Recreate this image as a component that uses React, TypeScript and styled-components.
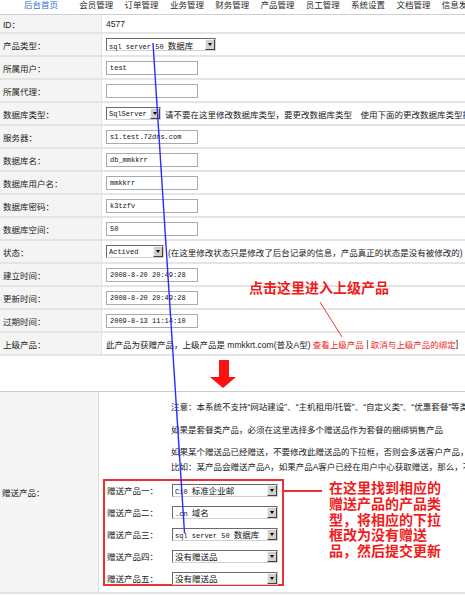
import React from "react";
import styled, { createGlobalStyle } from "styled-components";

const GlobalStyle = createGlobalStyle`
  html, body { margin: 0; padding: 0; background: #fff; }
  body {
    font-family: "Liberation Sans", "Noto Sans CJK SC", sans-serif;
    color: #222;
  }
`;

const RED = "#f01c1c";

const navItems = [
  "后台首页",
  "会员管理",
  "订单管理",
  "业务管理",
  "财务管理",
  "产品管理",
  "员工管理",
  "系统设置",
  "文档管理",
  "信息发布",
];

type Field =
  | { label: string; kind: "text"; value: string }
  | { label: string; kind: "input"; value: string }
  | { label: string; kind: "select"; value: React.ReactNode; width: number; note?: string };

const fields: Field[] = [
  { label: "ID：", kind: "text", value: "4577" },
  {
    label: "产品类型：",
    kind: "select",
    width: 110,
    value: (
      <>
        sql server 50 <Han>数据库</Han>
      </>
    ),
  },
  { label: "所属用户：", kind: "input", value: "test" },
  { label: "所属代理：", kind: "input", value: "" },
  {
    label: "数据库类型：",
    kind: "select",
    width: 55,
    value: "SqlServer",
    note: "请不要在这里修改数据库类型，要更改数据库类型　使用下面的更改数据库类型操作",
  },
  { label: "服务器：", kind: "input", value: "s1.test.72dns.com" },
  { label: "数据库名：", kind: "input", value: "db_mmkkrr" },
  { label: "数据库用户名：", kind: "input", value: "mmkkrr" },
  { label: "数据库密码：", kind: "input", value: "k3tzfv" },
  { label: "数据库空间：", kind: "input", value: "50" },
  {
    label: "状态：",
    kind: "select",
    width: 58,
    value: "Actived",
    note: "(在这里修改状态只是修改了后台记录的信息，产品真正的状态是没有被修改的)",
  },
  { label: "建立时间：", kind: "input", value: "2008-8-20 20:49:28" },
  { label: "更新时间：", kind: "input", value: "2008-8-20 20:49:28" },
  { label: "过期时间：", kind: "input", value: "2009-8-13 11:14:10" },
];

const gifts: { label: string; value: React.ReactNode }[] = [
  { label: "赠送产品一：", value: <>C10 <Han>标准企业邮</Han></> },
  { label: "赠送产品二：", value: <>.cn <Han>域名</Han></> },
  { label: "赠送产品三：", value: <>sql server 50 <Han>数据库</Han></> },
  { label: "赠送产品四：", value: <Han>没有赠送品</Han> },
  { label: "赠送产品五：", value: <Han>没有赠送品</Han> },
];

function Select({ width, children }: { width: number; children: React.ReactNode }) {
  return (
    <SelectBox style={{ width }}>
      <SelectText>{children}</SelectText>
      <SelectButton />
    </SelectBox>
  );
}

function Han({ children }: { children: React.ReactNode }) {
  return <HanText>{children}</HanText>;
}

export default function App() {
  return (
    <Page>
      <GlobalStyle />
      <Nav>
        {navItems.map((item, i) => (
          <NavItem key={item} $active={i === 0}>
            {item}
          </NavItem>
        ))}
      </Nav>

      <FormTable>
        {fields.map((f) => (
          <React.Fragment key={f.label}>
            <LabelCell>{f.label}</LabelCell>
            <ValueCell>
              {f.kind === "text" && f.value}
              {f.kind === "input" && <TextInput readOnly value={f.value} />}
              {f.kind === "select" && (
                <>
                  <Select width={f.width}>{f.value}</Select>
                  {f.note && <Note>{f.note}</Note>}
                </>
              )}
            </ValueCell>
          </React.Fragment>
        ))}
        <LabelCell>上级产品：</LabelCell>
        <ValueCell>
          此产品为获赠产品，上级产品是 mmkkrt.com(普及A型)&nbsp;
          <RedLink>查看上级产品</RedLink>&nbsp;|&nbsp;
          <RedLink>取消与上级产品的绑定</RedLink>]
        </ValueCell>
      </FormTable>

      <ArrowGap>
        <svg width="27" height="28" viewBox="0 0 27 28">
          <rect x="10" y="0" width="10" height="17" fill="#ff1010" />
          <polygon points="1,17 27,17 14,28" fill="#ff1010" />
        </svg>
      </ArrowGap>

      <GiftTable>
        <GiftLabel>赠送产品：</GiftLabel>
        <GiftValue>
          <Notes>
            <p>注意：本系统不支持“网站建设”、“主机租用/托管”、“自定义类”、“优惠套餐”等类型产品</p>
            <p>如果是套餐类产品，必须在这里选择多个赠送品作为套餐的捆绑销售产品</p>
            <p>
              如果某个赠送品已经赠送，不要修改此赠送品的下拉框，否则会多送客户产品，请注意
              <br />
              比如：某产品会赠送产品A，如果产品A客户已经在用户中心获取赠送，那么，不要修改
            </p>
          </Notes>
          <GiftArea>
            <RedBox>
              <GiftList>
                {gifts.map((g) => (
                  <GiftLine key={g.label}>
                    <GiftName>{g.label}</GiftName>
                    <Select width={106}>{g.value}</Select>
                  </GiftLine>
                ))}
              </GiftList>
            </RedBox>
            <Connector />
            <Callout>
              在这里找到相应的
              <br />
              赠送产品的产品类
              <br />
              型，将相应的下拉
              <br />
              框改为没有赠送
              <br />
              品，然后提交更新
            </Callout>
          </GiftArea>
        </GiftValue>
      </GiftTable>

      <Marks width="465" height="596" viewBox="0 0 465 596">
        <line x1="153" y1="43" x2="184.5" y2="533" stroke="#2b2bff" strokeWidth="1.4" />
        <line x1="320" y1="302" x2="342" y2="337" stroke={RED} strokeWidth="0.9" />
      </Marks>
      <ClickHint>点击这里进入上级产品</ClickHint>
    </Page>
  );
}

const Page = styled.div`
  position: relative;
  width: 465px;
  height: 596px;
  overflow: hidden;
  font-size: 8.5px;
`;

const Nav = styled.div`
  display: flex;
  gap: 11.3px;
  height: 14px;
  padding-left: 24px;
  border-bottom: 1px solid #cfcfcf;
  line-height: 10px;
  white-space: nowrap;
  overflow: hidden;
`;

const NavItem = styled.span<{ $active: boolean }>`
  flex: none;
  width: 34px;
  margin-right: ${(p) => (p.$active ? "10px" : "0")};
  color: ${(p) => (p.$active ? "#2f6fd0" : "#2a2a2a")};
`;

const FormTable = styled.div`
  display: grid;
  grid-template-columns: 101px 1fr;
  grid-template-rows: 17px repeat(14, 21px);
  row-gap: 2px;
  column-gap: 1px;
  padding-bottom: 2px;
  background: #e4e4e4;
`;

const LabelCell = styled.div`
  display: flex;
  align-items: center;
  padding-left: 3px;
  background: #f4f4f4;
  white-space: nowrap;
`;

const ValueCell = styled.div`
  display: flex;
  align-items: center;
  padding-left: 4px;
  background: #fff;
  white-space: nowrap;
  overflow: hidden;
`;

const TextInput = styled.input`
  box-sizing: border-box;
  width: 92px;
  height: 14px;
  margin: 0;
  padding: 0 3px;
  border: 1px solid #a5acb2;
  background: #fff;
  font-family: "Liberation Mono", "Noto Sans CJK SC", monospace;
  font-size: 7px;
  color: #111;
  outline: none;
`;

const SelectBox = styled.div`
  box-sizing: border-box;
  flex: none;
  display: flex;
  align-items: center;
  height: 13px;
  border: 1px solid;
  border-color: #6a6a6a #d0d0d0 #d0d0d0 #6a6a6a;
  background: #fff;
`;

const SelectText = styled.span`
  flex: 1;
  padding-left: 2px;
  overflow: hidden;
  font-family: "Liberation Mono", "Noto Sans CJK SC", monospace;
  font-size: 7px;
  color: #111;
  white-space: nowrap;
`;

const HanText = styled.span`
  font-family: "Noto Sans CJK SC", sans-serif;
  font-size: 8.5px;
`;

const SelectButton = styled.span`
  position: relative;
  flex: none;
  box-sizing: border-box;
  width: 10px;
  height: 11px;
  border: 1px solid;
  border-color: #f4f4f4 #404040 #404040 #f4f4f4;
  background: #d4d0c8;

  &::after {
    content: "";
    position: absolute;
    left: 2px;
    top: 3px;
    border-left: 2px solid transparent;
    border-right: 2px solid transparent;
    border-top: 3px solid #000;
  }
`;

const Note = styled.span`
  margin-left: 4px;
`;

const RedLink = styled.span`
  color: ${RED};
`;

const ArrowGap = styled.div`
  height: 35px;
  padding-left: 209px;
  padding-top: 4px;
  box-sizing: border-box;
`;

const GiftTable = styled.div`
  display: grid;
  grid-template-columns: 98px 1fr;
  column-gap: 1px;
  background: #dcdcdc;
  border-top: 1px solid #cdcdcd;
  border-bottom: 2px solid #e2e2e2;
`;

const GiftLabel = styled.div`
  display: flex;
  align-items: center;
  padding-left: 2px;
  background: #f5f5f5;
`;

const GiftValue = styled.div`
  padding: 7.5px 0 6px;
  background: #fff;
  overflow: hidden;
`;

const Notes = styled.div`
  margin-left: 72px;
  white-space: nowrap;

  p {
    margin: 0;
    line-height: 15px;
  }
  p + p {
    margin-top: 8px;
  }
  p:last-child {
    margin-top: 7px;
  }
`;

const GiftArea = styled.div`
  display: flex;
  align-items: flex-start;
  margin: 4.5px 0 0 4px;
`;

const RedBox = styled.div`
  box-sizing: border-box;
  flex: none;
  width: 181px;
  height: 107px;
  padding-left: 2px;
  border: 2px solid #ec2f35;
`;

const GiftList = styled.div`
  margin-top: -2px;
`;

const GiftLine = styled.div`
  display: flex;
  align-items: center;
  height: 22px;
`;

const GiftName = styled.span`
  width: 65px;
  flex: none;
`;

const Connector = styled.div`
  flex: none;
  width: 38px;
  height: 1.5px;
  margin-top: 11px;
  background: #ec2f35;
`;

const Callout = styled.div`
  margin: 1px 0 0 7px;
  font-family: "Noto Sans CJK SC", sans-serif;
  font-weight: 700;
  font-size: 14px;
  line-height: 15.8px;
  color: ${RED};
  white-space: nowrap;
`;

const Marks = styled.svg`
  position: absolute;
  left: 0;
  top: 0;
  pointer-events: none;
`;

const ClickHint = styled.div`
  position: absolute;
  left: 249px;
  top: 279px;
  font-family: "Noto Sans CJK SC", sans-serif;
  font-weight: 700;
  font-size: 14px;
  line-height: 16px;
  color: ${RED};
  white-space: nowrap;
`;
